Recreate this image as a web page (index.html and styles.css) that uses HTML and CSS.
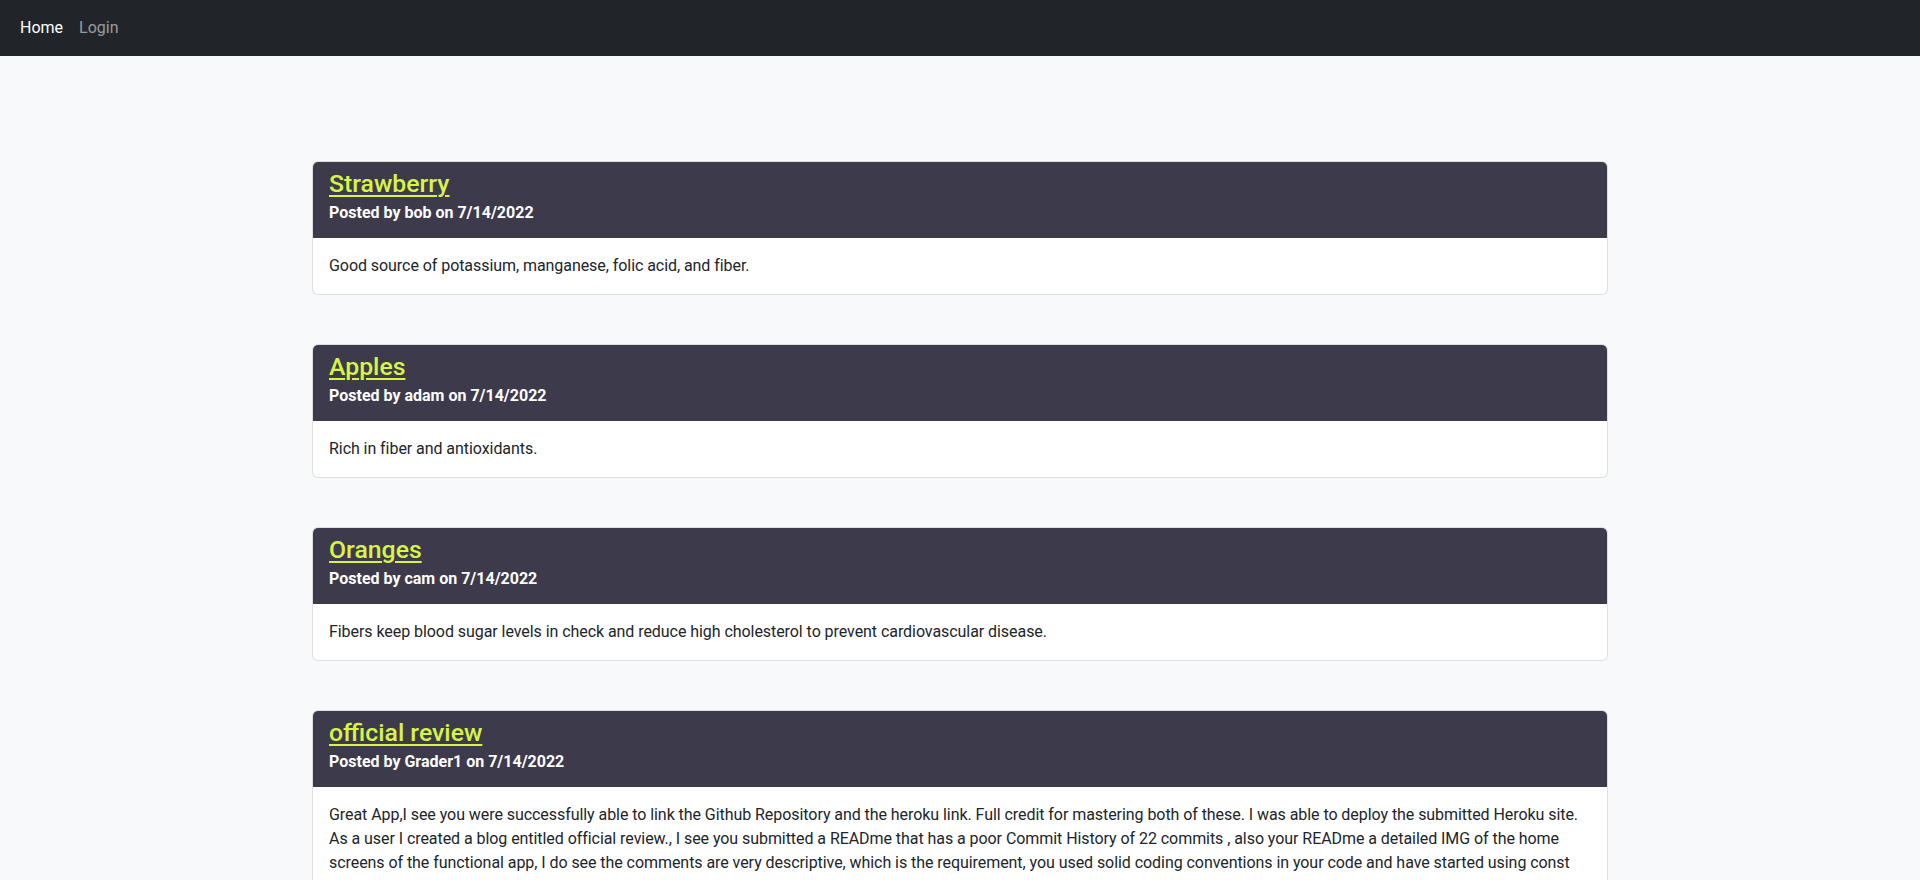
FILE: index.html
```html
<!DOCTYPE html>
<html lang="en">
<head>
<meta charset="utf-8">
<title>Tech Blog</title>
<link rel="stylesheet" href="styles.css">
</head>
<body>
<nav class="navbar">
  <div class="nav-inner">
    <a class="nav-link active" href="#">Home</a>
    <a class="nav-link" href="#">Login</a>
  </div>
</nav>
<main class="container">
  <article class="card">
    <header class="card-header">
      <h4 class="card-title"><a href="#">Strawberry</a></h4>
      <p class="card-meta">Posted by bob on 7/14/2022</p>
    </header>
    <div class="card-body">
      <p>Good source of potassium, manganese, folic acid, and fiber.</p>
    </div>
  </article>
  <article class="card">
    <header class="card-header">
      <h4 class="card-title"><a href="#">Apples</a></h4>
      <p class="card-meta">Posted by adam on 7/14/2022</p>
    </header>
    <div class="card-body">
      <p>Rich in fiber and antioxidants.</p>
    </div>
  </article>
  <article class="card">
    <header class="card-header">
      <h4 class="card-title"><a href="#">Oranges</a></h4>
      <p class="card-meta">Posted by cam on 7/14/2022</p>
    </header>
    <div class="card-body">
      <p>Fibers keep blood sugar levels in check and reduce high cholesterol to prevent cardiovascular disease.</p>
    </div>
  </article>
  <article class="card">
    <header class="card-header">
      <h4 class="card-title"><a href="#">official review</a></h4>
      <p class="card-meta">Posted by Grader1 on 7/14/2022</p>
    </header>
    <div class="card-body">
      <p>Great App,I see you were successfully able to link the Github Repository and the heroku link. Full credit for mastering both of these. I was able to deploy the submitted Heroku site. As a user I created a blog entitled official review., I see you submitted a READme that has a poor Commit History of 22 commits , also your READme a detailed IMG of the home screens of the functional app, I do see the comments are very descriptive, which is the requirement, you used solid coding conventions in your code and have started using const and let variables throughout the application.</p>
    </div>
  </article>
</main>
</body>
</html>
```
FILE: styles.css
```css
* { box-sizing: border-box; }

html, body {
  margin: 0;
  padding: 0;
}

body {
  background: #f8f9fa;
  color: #212529;
  font-family: Roboto, "Liberation Sans", sans-serif;
  font-size: 16px;
  line-height: 24px;
}

.navbar {
  background: #212529;
  height: 56px;
  padding: 8px 12px;
}

.nav-inner {
  display: flex;
  align-items: center;
}

.nav-link {
  display: block;
  padding: 8px;
  line-height: 24px;
  font-size: 16px;
  color: rgba(255, 255, 255, 0.55);
  text-decoration: none;
}

.nav-link.active {
  color: #fff;
}

.container {
  width: 1320px;
  margin: 0 auto;
  padding: 105px 12px 40px;
  display: flex;
  flex-direction: column;
  gap: 49px;
}

.card {
  background: #fff;
  border: 1px solid rgba(0, 0, 0, 0.125);
  border-radius: 6px;
  overflow: hidden;
}

.card-header {
  background: #3d3a4c;
  padding: 8px 16px;
}

.card-title {
  margin: 0;
  font-size: 24.8px;
  line-height: 28.8px;
  font-weight: 500;
}

.card-title a {
  color: #d7f447;
  text-decoration: underline;
  text-decoration-thickness: 2px;
  text-underline-offset: 3px;
}

.card-meta {
  margin: 4px 0 8px;
  color: #fff;
  font-weight: 700;
  font-size: 16px;
  line-height: 19.2px;
}

.card-body {
  padding: 16px;
}

.card-body p {
  margin: 0;
  letter-spacing: -0.06px;
}
```
